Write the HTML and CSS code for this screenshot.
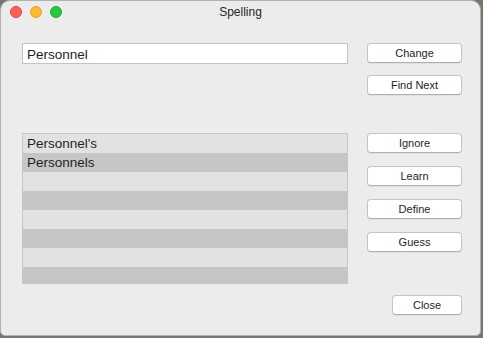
FILE: index.html
```html
<!DOCTYPE html>
<html lang="en">
<head>
    <meta charset="UTF-8">
    <title>Spelling</title>
    <link rel="stylesheet" href="styles.css">
</head>
<body>
    <div class="window">
        <div class="titlebar">
            <div class="lights">
                <span class="light close-light"></span>
                <span class="light min-light"></span>
                <span class="light max-light"></span>
            </div>
            <div class="title">Spelling</div>
            <div></div>
        </div>
        <div class="content">
            <div class="left-col">
                <div class="word-field">Personnel</div>
                <div class="guess-list">
                    <div class="row">Personnel's</div>
                    <div class="row">Personnels</div>
                    <div class="row"></div>
                    <div class="row"></div>
                    <div class="row"></div>
                    <div class="row"></div>
                    <div class="row"></div>
                    <div class="row"></div>
                </div>
            </div>
            <div class="right-col">
                <button class="btn">Change</button>
                <button class="btn">Find Next</button>
                <button class="btn group-start">Ignore</button>
                <button class="btn">Learn</button>
                <button class="btn">Define</button>
                <button class="btn">Guess</button>
                <button class="btn close-btn">Close</button>
            </div>
        </div>
    </div>
</body>
</html>
```

FILE: styles.css
```css
/* Spelling panel */
body {
    margin: 0;
    background-color: #77766c;
    font-family: "Liberation Sans", Arial, sans-serif;
    color: #1e1e1e;
}
.window {
    width: 479px;
    height: 334px;
    background: #ececec;
    border: 1px solid #b2b2b2;
    border-radius: 10px 10px 5px 5px;
    overflow: hidden;
    display: flex;
    flex-direction: column;
}
.titlebar {
    height: 21px;
    display: grid;
    grid-template-columns: 1fr auto 1fr;
    align-items: center;
}
.lights {
    display: flex;
    gap: 8px;
    padding-left: 9px;
}
.light {
    width: 12px;
    height: 12px;
    border-radius: 50%;
    box-sizing: border-box;
}
.close-light {
    background: #fe5f57;
    border: 1px solid #e0443e;
}
.min-light {
    background: #febc2e;
    border: 1px solid #dea123;
}
.max-light {
    background: #28c840;
    border: 1px solid #1aab29;
}
.title {
    font-size: 12px;
    color: #262626;
}
.content {
    display: grid;
    grid-template-columns: 326px 95px;
    column-gap: 19px;
    padding: 21px 0 0 21px;
}
.left-col {
    display: flex;
    flex-direction: column;
}
.word-field {
    height: 19px;
    background: #fff;
    border: 1px solid #c3c3c3;
    font-size: 13.5px;
    line-height: 21px;
    padding-left: 4px;
}
.guess-list {
    margin-top: 69px;
    height: 150px;
    border: 1px solid #c6c6c6;
    border-bottom: none;
    overflow: hidden;
}
.row {
    height: 19px;
    line-height: 19px;
    font-size: 13.5px;
    padding-left: 4px;
    background: #e2e2e2;
}
.row:nth-child(even) {
    background: #c6c6c6;
}
.right-col {
    display: flex;
    flex-direction: column;
    gap: 12px;
}
.btn {
    height: 20px;
    padding: 0;
    background: #fff;
    border: 1px solid #c4c4c4;
    border-bottom-color: #b0b0b0;
    border-radius: 4px;
    box-shadow: 0 1px 1px rgba(0,0,0,0.06);
    font-family: "Liberation Sans", Arial, sans-serif;
    font-size: 11px;
    color: #1e1e1e;
}
.group-start {
    margin-top: 26px;
}
.right-col .btn:nth-child(n+4) {
    margin-top: 1px;
}
.close-btn {
    margin-top: 31px !important;
    align-self: flex-end;
    width: 70px;
}
```
